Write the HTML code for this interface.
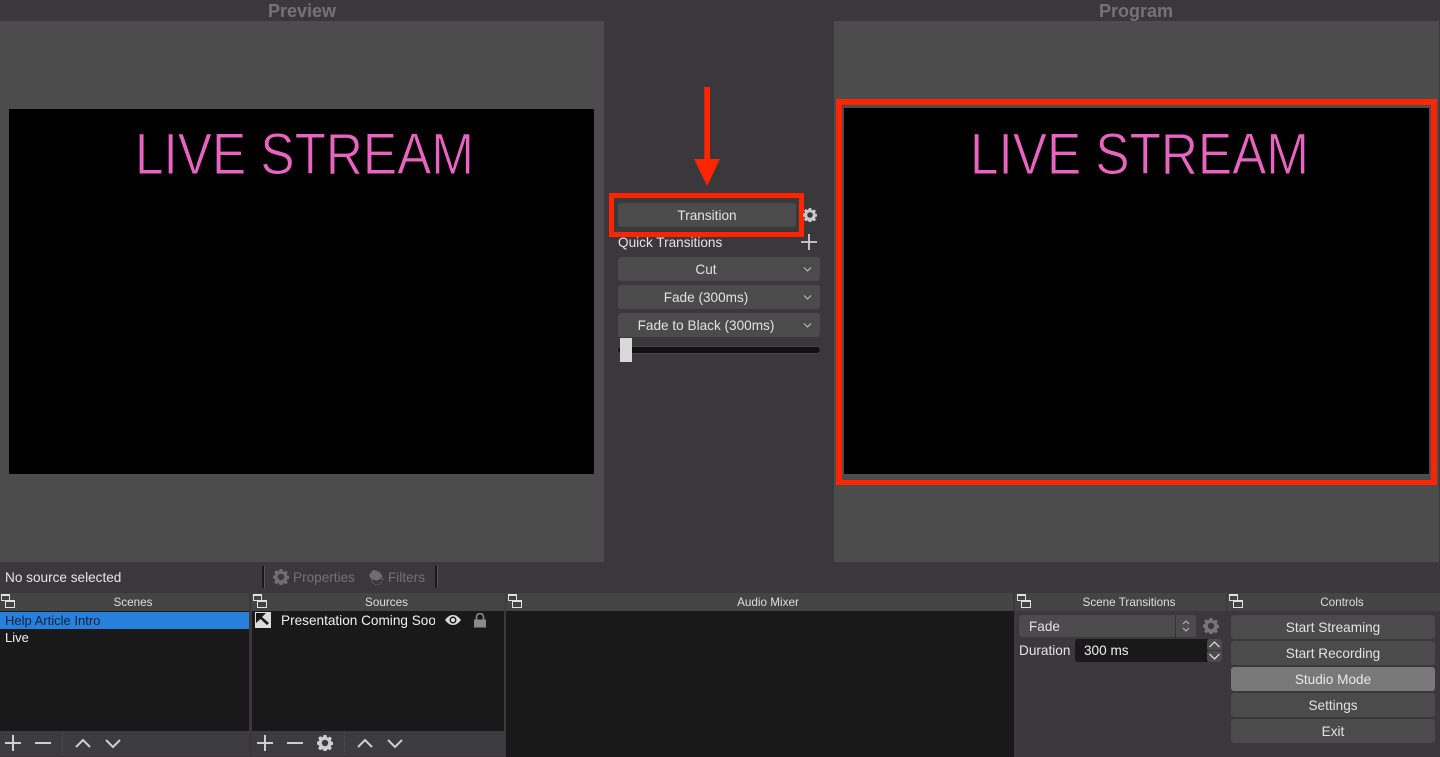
<!DOCTYPE html>
<html><head><meta charset="utf-8"><style>
html,body{margin:0;padding:0}
body{width:1440px;height:757px;position:relative;overflow:hidden;background:#3a383b;font-family:"Liberation Sans",sans-serif;font-size:13.6px;color:#e6e6e6}
div,span.a,svg{position:absolute}
.t{white-space:nowrap;line-height:18px;height:18px}
.c{text-align:center}
.b{background:#4b4b4b;border-radius:3px;text-align:center;color:#e2e2e2;line-height:26px;height:24px}
.h{background:#444445;height:18px;top:593px;text-align:center;font-size:11.7px;line-height:20px;color:#dedede}
.l{background:#19191a}
.red{border:solid #ff2500;box-sizing:border-box}
</style></head><body>
<svg width="0" height="0" style="position:absolute"><defs>
<symbol id="gear" viewBox="0 0 16 16"><path fill-rule="evenodd" d="M6.6 0h2.8l.4 2.1 1.3.6 1.8-1.2 2 2-1.2 1.8.6 1.3 2.1.4v2.8l-2.1.4-.6 1.3 1.2 1.8-2 2-1.8-1.2-1.3.6-.4 2.1H6.6l-.4-2.1-1.3-.6-1.8 1.2-2-2 1.2-1.8-.6-1.3L0 9.4V6.6l1.7-.4.6-1.3-1.2-1.8 2-2 1.8 1.2 1.3-.6zM8 4.8a3.2 3.2 0 1 0 0 6.4 3.2 3.2 0 0 0 0-6.4z"/></symbol>
<symbol id="dock" viewBox="0 0 14 14"><path fill="none" stroke="#e0e0e0" stroke-width="1" d="M.5.5h8v6h-8zM4.5 6.500h9v7h-9z"/><path fill="#e0e0e0" d="M0 0h9v2H0zM4 6h10v2H4z"/><path fill="#444445" d="M5 8.500h8v4.500H5z"/></symbol>
</defs></svg>

<!-- top labels -->
<div class="t c" style="left:0;width:604px;top:1px;height:20px;line-height:20px;font-size:18px;font-weight:bold;color:#737375">Preview</div>
<div class="t c" style="left:834px;width:604px;top:1px;height:20px;line-height:20px;font-size:18px;font-weight:bold;color:#737375">Program</div>

<!-- preview -->
<div style="left:0;top:21px;width:604px;height:541px;background:#4c4c4c"></div>
<div style="left:9px;top:109px;width:585px;height:365px;background:#000"></div>
<!-- program -->
<div style="left:834px;top:21px;width:605px;height:541px;background:#4c4c4c"></div>
<div style="left:844px;top:108px;width:585px;height:366px;background:#000"></div>
<div class="red" style="left:836px;top:99px;width:601px;height:386px;border-width:6px 6px 5px 6px"></div>

<svg style="left:0;top:0" width="1440" height="200">
<text x="135" y="174" font-family="Liberation Sans" font-size="58" fill="#e964c1" stroke="#000" stroke-width="1" textLength="339" lengthAdjust="spacingAndGlyphs">LIVE STREAM</text>
<text x="970" y="174" font-family="Liberation Sans" font-size="58" fill="#e964c1" stroke="#000" stroke-width="1" textLength="339" lengthAdjust="spacingAndGlyphs">LIVE STREAM</text>
</svg>

<!-- center controls -->
<svg style="left:690px;top:85px" width="36" height="104"><path fill="#ff2500" d="M14.300 2H20V74h10L17.200 101 4 74h10.300z"/></svg>
<div class="b" style="left:618px;top:203px;width:178px">Transition</div>
<div class="red" style="left:609px;top:193px;width:195px;height:44px;border-width:5px"></div>
<svg style="left:803px;top:208px;fill:#c9c9c9" width="14" height="14"><use href="#gear"/></svg>
<div class="t" style="left:618px;top:234px;color:#e2e2e2">Quick Transitions</div>
<svg style="left:801px;top:234px" width="16" height="16"><path d="M8 0v16M0 8h16" stroke="#d0d0d0" stroke-width="1.800"/></svg>
<div class="b" style="left:618px;top:257px;width:202px;padding-right:26px;box-sizing:border-box">Cut</div>
<div class="b" style="left:618px;top:285px;width:202px;padding-right:26px;box-sizing:border-box">Fade (300ms)</div>
<div class="b" style="left:618px;top:313px;width:202px;padding-right:26px;box-sizing:border-box">Fade to Black (300ms)</div>
<svg style="left:803px;top:266px" width="9" height="66" fill="none" stroke="#c0c0c0" stroke-width="1"><path d="M1 1.500l3.500 3.500L8 1.500M1 29.500l3.500 3.500L8 29.500M1 57.500l3.500 3.500L8 57.500"/></svg>
<div style="left:618px;top:347px;width:202px;height:6px;background:#111;border-radius:3px;box-shadow:0 0 0 1px #444"></div>
<div style="left:620px;top:338px;width:12px;height:24px;background:#d8d8d8"></div>

<!-- status bar -->
<div style="left:0;top:562px;width:1440px;height:31px;background:#3a383b"></div>
<div class="t" style="left:5px;top:569px;color:#e6e6e6">No source selected</div>
<div style="left:262px;top:566px;width:2px;height:22px;background:#19191a;border:solid #555;border-width:0 1px 0 0"></div>
<div style="left:435px;top:566px;width:2px;height:22px;background:#19191a;border:solid #555;border-width:0 1px 0 0"></div>
<svg style="left:273px;top:569px;fill:#6e6e6e" width="16" height="16"><use href="#gear"/></svg>
<div class="t" style="left:293px;top:569px;color:#727272">Properties</div>
<svg style="left:368px;top:569px" width="16" height="16"><path fill="#6e6e6e" d="M1 6l4-5 3 .5 4 2 2.500 3.500-2 3-4 1.500L3 10z"/><circle cx="9" cy="10" r="5.500" fill="none" stroke="#6e6e6e" stroke-dasharray="1.500 1.500"/></svg>
<div class="t" style="left:388px;top:569px;color:#727272">Filters</div>

<!-- dock panels -->
<div class="h" style="left:0;width:249px;padding-left:17px;box-sizing:border-box">Scenes</div>
<div class="h" style="left:251px;width:254px;padding-left:17px;box-sizing:border-box">Sources</div>
<div class="h" style="left:506px;width:507px;padding-left:17px;box-sizing:border-box">Audio Mixer</div>
<div class="h" style="left:1015px;width:211px;padding-left:17px;box-sizing:border-box">Scene Transitions</div>
<div class="h" style="left:1227px;width:213px;padding-left:17px;box-sizing:border-box;">Controls</div>
<svg style="left:1px;top:594px" width="14" height="14"><use href="#dock"/></svg>
<svg style="left:253px;top:594px" width="14" height="14"><use href="#dock"/></svg>
<svg style="left:508px;top:594px" width="14" height="14"><use href="#dock"/></svg>
<svg style="left:1017px;top:594px" width="14" height="14"><use href="#dock"/></svg>
<svg style="left:1229px;top:594px" width="14" height="14"><use href="#dock"/></svg>

<!-- scenes -->
<div class="l" style="left:0;top:611px;width:249px;height:120px"></div>
<div style="left:0;top:612px;width:249px;height:17px;background:#2680dc"></div>
<div class="t" style="left:5px;top:612px;color:#10233a;font-size:13px">Help Article Intro</div>
<div class="t" style="left:5px;top:629px;color:#f0f0f0;font-size:13px">Live</div>
<div style="left:0;top:731px;width:249px;height:25px;background:#3c3c3e"></div>
<svg style="left:0;top:731px" width="140" height="25" fill="none" stroke="#cfcfcf" stroke-width="2"><path d="M13 4v16M5 12h16M35 12h16M76 16l7-7 7 7M106 9l7 7 7-7"/><path d="M62.500 2v22" stroke="#555" stroke-width="1" stroke-dasharray="1 2"/></svg>

<!-- sources -->
<div class="l" style="left:252px;top:611px;width:252px;height:120px"></div>
<svg style="left:255px;top:612px" width="16" height="16"><rect width="16" height="16" fill="#dcdcdc"/><path d="M1 1h10L7 5l7 6-2 2-6.500-6L1 11z" fill="#19191a"/></svg>
<div class="t" style="left:281px;top:612px;width:154px;overflow:hidden;color:#efefef">Presentation Coming Soon</div>
<svg style="left:445px;top:614px" width="16" height="12"><path fill="#dcdcdc" fill-rule="evenodd" d="M8 1c3.500 0 6 2.500 8 5-2 2.500-4.500 5-8 5S2 8.500 0 6c2-2.500 4.500-5 8-5zm0 1.500A3.500 3.500 0 1 0 8 9.500a3.500 3.500 0 0 0 0-7zM8 4a2 2 0 1 1 0 4 2 2 0 0 1 0-4z"/></svg>
<svg style="left:473px;top:613px" width="14" height="15"><path d="M3.500 7V4a3.500 3.500 0 0 1 7 0V7" fill="none" stroke="#8a8a8a" stroke-width="1.600"/><rect x="1" y="6.500" width="12" height="8" fill="#8a8a8a"/></svg>
<div style="left:252px;top:731px;width:252px;height:25px;background:#3c3c3e"></div>
<svg style="left:252px;top:731px" width="160" height="25" fill="none" stroke="#cfcfcf" stroke-width="2"><path d="M13 4v16M5 12h16M35 12h16M106 16l7-7 7 7M136 9l7 7 7-7"/><path d="M92.500 2v22" stroke="#555" stroke-width="1" stroke-dasharray="1 2"/></svg>
<svg style="left:317px;top:735px;fill:#cfcfcf" width="16" height="16"><use href="#gear"/></svg>

<!-- audio mixer -->
<div class="l" style="left:506px;top:611px;width:508px;height:146px"></div>

<!-- scene transitions -->
<div style="left:1019px;top:615px;width:177px;height:22px;background:#4b4b4b;border-radius:3px"></div>
<div style="left:1175px;top:615px;width:1px;height:22px;background:#333"></div>
<div class="t" style="left:1029px;top:618px;color:#e2e2e2">Fade</div>
<svg style="left:1181px;top:619px" width="10" height="14" fill="none" stroke="#bbb"><path d="M2 5l3-3 3 3M2 9l3 3 3-3"/></svg>
<svg style="left:1203px;top:618px;fill:#767676" width="16" height="16"><use href="#gear"/></svg>
<div class="t" style="left:1019px;top:642px;color:#e6e6e6">Duration</div>
<div style="left:1075px;top:639px;width:133px;height:23px;background:#19191a;border-radius:3px 0 0 3px"></div>
<div class="t" style="left:1084px;top:642px;color:#f0f0f0">300 ms</div>
<div style="left:1207px;top:639px;width:15px;height:11px;background:#4b4b4b;border-radius:3px 3px 0 0"></div>
<div style="left:1207px;top:651px;width:15px;height:11px;background:#4b4b4b;border-radius:0 0 3px 3px"></div>
<svg style="left:1207px;top:639px" width="15" height="23" fill="none" stroke="#d8d8d8" stroke-width="1.300"><path d="M2.500 8l5-5 5 5M2.500 15l5 5 5-5"/></svg>

<!-- controls -->
<div class="b" style="left:1231px;top:615px;width:204px">Start Streaming</div>
<div class="b" style="left:1231px;top:641px;width:204px">Start Recording</div>
<div class="b" style="left:1231px;top:667px;width:204px;background:#787878;color:#e8e8e8">Studio Mode</div>
<div class="b" style="left:1231px;top:693px;width:204px">Settings</div>
<div class="b" style="left:1231px;top:719px;width:204px">Exit</div>
</body></html>
